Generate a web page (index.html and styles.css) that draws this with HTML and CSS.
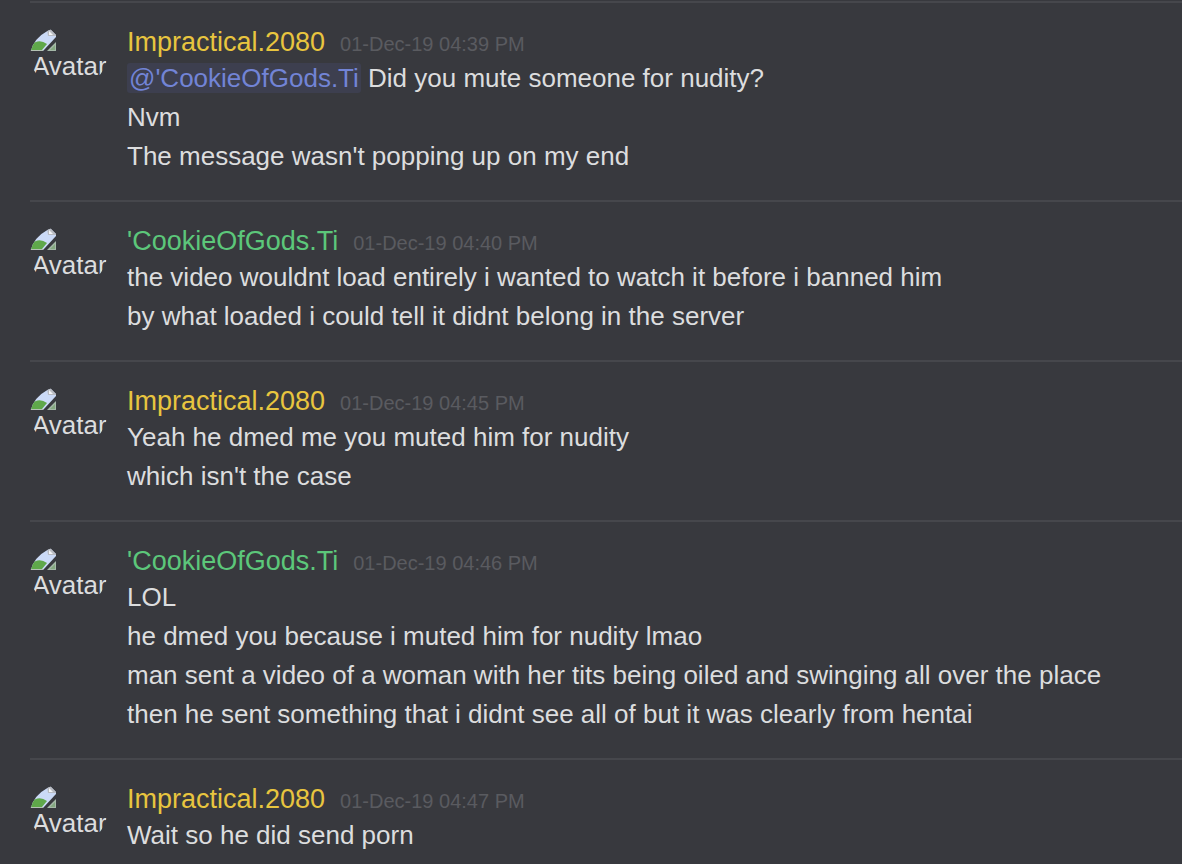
FILE: index.html
```html
<!DOCTYPE html>
<html lang="en">
<head>
<meta charset="utf-8">
<title>Chat log</title>
<link rel="stylesheet" href="styles.css">
</head>
<body>
<svg class="defs" aria-hidden="true">
  <symbol id="broken" viewBox="0 0 26 24">
    <path d="M0 22V0H20L26 6V8L13 22Z" fill="#cbdaf6"/>
    <path d="M1 21V16Q9 9 17 15L12 21Z" fill="#5fa84a"/>
    <path d="M0 21H13V22H0Z" fill="#b4c2b4"/>
    <path d="M17 0H20L26 6V7H18Z" fill="#b9bcc2"/>
    <path d="M19 2L23 6H19Z" fill="#f4f5f7"/>
    <path d="M17 22L26 13V22Z" fill="#a5b8a8"/>
    <path d="M20 21L25 16V21Z" fill="#84a880"/>
  </symbol>
</svg>
<main class="log">
  <article class="group">
    <div class="avatar"><svg class="icon"><use href="#broken"/></svg><span class="alt">Avatar</span></div>
    <div class="body">
      <header class="head"><span class="name gold">Impractical.2080</span><time class="time">01-Dec-19 04:39 PM</time></header>
      <p class="line"><a class="mention" href="#">@'CookieOfGods.Ti</a> Did you mute someone for nudity?</p>
      <p class="line">Nvm</p>
      <p class="line">The message wasn't popping up on my end</p>
    </div>
  </article>
  <article class="group">
    <div class="avatar"><svg class="icon"><use href="#broken"/></svg><span class="alt">Avatar</span></div>
    <div class="body">
      <header class="head"><span class="name green">'CookieOfGods.Ti</span><time class="time">01-Dec-19 04:40 PM</time></header>
      <p class="line">the video wouldnt load entirely i wanted to watch it before i banned him</p>
      <p class="line">by what loaded i could tell it didnt belong in the server</p>
    </div>
  </article>
  <article class="group">
    <div class="avatar"><svg class="icon"><use href="#broken"/></svg><span class="alt">Avatar</span></div>
    <div class="body">
      <header class="head"><span class="name gold">Impractical.2080</span><time class="time">01-Dec-19 04:45 PM</time></header>
      <p class="line">Yeah he dmed me you muted him for nudity</p>
      <p class="line">which isn't the case</p>
    </div>
  </article>
  <article class="group">
    <div class="avatar"><svg class="icon"><use href="#broken"/></svg><span class="alt">Avatar</span></div>
    <div class="body">
      <header class="head"><span class="name green">'CookieOfGods.Ti</span><time class="time">01-Dec-19 04:46 PM</time></header>
      <p class="line">LOL</p>
      <p class="line">he dmed you because i muted him for nudity lmao</p>
      <p class="line">man sent a video of a woman with her tits being oiled and swinging all over the place</p>
      <p class="line">then he sent something that i didnt see all of but it was clearly from hentai</p>
    </div>
  </article>
  <article class="group">
    <div class="avatar"><svg class="icon"><use href="#broken"/></svg><span class="alt">Avatar</span></div>
    <div class="body">
      <header class="head"><span class="name gold">Impractical.2080</span><time class="time">01-Dec-19 04:47 PM</time></header>
      <p class="line">Wait so he did send porn</p>
    </div>
  </article>
</main>
</body>
</html>
```
FILE: styles.css
```css
body {
  margin: 0;
  background: #38393e;
  color: #dcddde;
  font-family: "Liberation Sans", Arial, sans-serif;
  font-size: 26px;
}
.defs { display: none; }
.log { padding: 1px 0 0 30px; }
.group {
  display: flex;
  gap: 20px;
  padding: 22px 0 24px;
  border-top: 2px solid #46474c;
}
.group:last-child { padding-bottom: 0; }
.avatar {
  flex: none;
  width: 77px;
  height: 62px;
  margin-top: 1px;
  padding-top: 3px;
  box-sizing: border-box;
  border-radius: 50%;
  overflow: hidden;
}
.icon { display: block; width: 26px; height: 24px; }
.alt { display: block; padding-left: 2px; line-height: 26px; }
.body { flex: 1; min-width: 0; }
.head { display: flex; align-items: baseline; gap: 15px; }
.name { font-size: 27px; line-height: 34px; }
.gold { color: #e8c53f; }
.green { color: #5cc77a; }
.time { color: #5a5b60; font-size: 20px; line-height: 24px; }
.line { margin: 0; line-height: 39px; }
.mention {
  padding: 0 2px;
  border-radius: 3px;
  background: #3d3f4f;
  color: #7284d6;
  text-decoration: none;
}
```
